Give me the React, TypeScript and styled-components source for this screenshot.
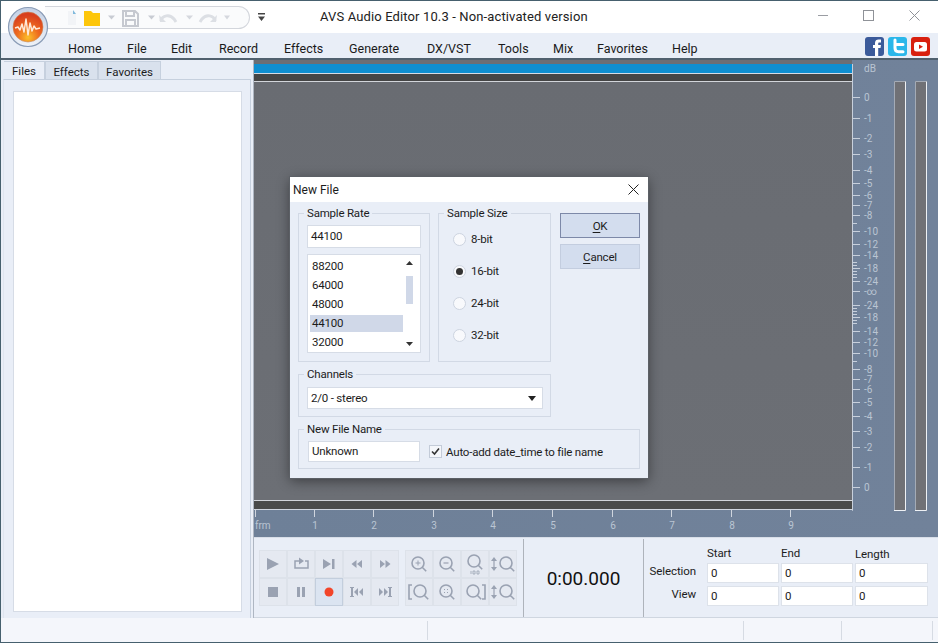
import React from 'react';
import styled, { createGlobalStyle } from 'styled-components';

const GlobalStyle = createGlobalStyle`
  html, body { margin: 0; padding: 0; overflow: hidden; }
  body { font-family: Roboto, 'Noto Sans', sans-serif; font-size: 12px; color: #1c1c1c; }
`;

const Window = styled.div`
  position: relative;
  width: 938px;
  height: 643px;
  box-sizing: border-box;
  display: flex;
  flex-direction: column;
  border-top: 1px solid #46606e;
  border-bottom: 1px solid #46606e;
  border-left: 1px solid #46606e;
  background: #e9eef7;
  overflow: hidden;
`;

const TitleBar = styled.div`
  position: relative;
  height: 32px;
  flex: none;
  background: #fff;
  display: flex;
  align-items: center;
`;

const Logo = styled.svg`
  position: absolute;
  left: 6px;
  top: 5px;
  z-index: 2;
`;

const QuickBar = styled.div`
  height: 23px;
  width: 205px;
  margin: 0 0 0 44px;
  box-sizing: border-box;
  border: 1px solid #d3d6dc;
  border-left: none;
  border-radius: 0 13px 13px 0;
  background: #fafbfc;
  display: flex;
  align-items: center;
`;

const Customize = styled.svg`
  margin-left: 8px;
`;

const AppTitle = styled.div`
  position: absolute;
  left: 319px;
  top: 8px;
  font-size: 13px;
  letter-spacing: 0.13px;
  line-height: 16px;
  color: #222;
`;

const WindowButtons = styled.div`
  margin-left: auto;
  margin-top: -4px;
  display: flex;
  gap: 35px;
  padding-right: 18px;
`;

const MenuBar = styled.div`
  height: 25px;
  flex: none;
  box-sizing: border-box;
  padding: 7px 8px 0 67px;
  display: flex;
  align-items: flex-start;
  background: #e9eef7;
  border-bottom: 0;
`;

const MenuItem = styled.span<{ $width: number }>`
  width: ${({ $width }) => $width}px;
  flex: none;
  line-height: 17px;
  font-size: 12.5px;
  color: #1a1a1a;
`;

const Social = styled.div`
  margin-left: auto;
  margin-top: -3px;
  display: flex;
  gap: 4px;
`;

const HeavyRule = styled.div`
  height: 2px;
  flex: none;
  background: #50606e;
`;

const Body = styled.div`
  flex: 1;
  display: flex;
  min-height: 0;
`;

const LeftPane = styled.div`
  width: 252px;
  flex: none;
  box-sizing: border-box;
  padding: 1px 2px 0 2px;
  display: flex;
  flex-direction: column;
  background: #e9eef7;
`;

const Tabs = styled.div`
  display: flex;
  height: 19px;
  flex: none;
  padding-left: 1px;
`;

const Tab = styled.div<{ $active?: boolean; $width: number }>`
  width: ${({ $width }) => $width}px;
  box-sizing: border-box;
  text-align: center;
  line-height: ${({ $active }) => ($active ? 18 : 20)}px;
  font-size: 11.5px;
  background: ${({ $active }) => ($active ? '#e9eef7' : '#d9e1ed')};
  border: 1px solid #c6d0de;
  border-bottom: ${({ $active }) => ($active ? '0' : '1px solid #c6d0de')};
  border-left: ${({ $active }) => ($active ? '0' : '1px solid #c6d0de')};
  margin-top: 0;
`;

const TabPanel = styled.div`
  flex: 1;
  margin-top: -1px;
  box-sizing: border-box;
  padding: 11px 8px 6px 9px;
  border-top: 1px solid #c6d0de;
  border-right: 1px solid #c6d0de;
  border-left: 1px solid #dfe5ef;
`;

const FileList = styled.div`
  height: 100%;
  background: #fff;
  border: 1px solid #d6dce6;
  box-sizing: border-box;
`;

const RightPane = styled.div`
  flex: 1;
  min-width: 0;
  display: flex;
  flex-direction: column;
  border-left: 1px solid #aeb6c2;
`;

const WavePane = styled.div`
  height: 477px;
  flex: none;
  display: flex;
  background: #6e8098;
  background: linear-gradient(90deg, #6e8098, #71829a);
`;

const WaveColumn = styled.div`
  width: 598px;
  flex: none;
  display: flex;
  flex-direction: column;
  padding-top: 0;
`;

const WaveFrame = styled.div`
  height: 450px;
  flex: none;
  display: flex;
  flex-direction: column;
  background: #6b6e74;
  padding-top: 4px;
  box-sizing: border-box;
`;

const Overview = styled.div`
  height: 9px;
  flex: none;
  background: #0f8ecf;
  border-bottom: 1px solid #d5dbe4;
`;

const TimeStrip = styled.div`
  height: 7px;
  flex: none;
  background: #454545;
  border-bottom: 1px solid #d2d5da;
`;

const Canvas = styled.div`
  flex: 1;
  background: linear-gradient(180deg, #696c72, #6c6f75);
  border-bottom: 1px solid #d2d5da;
`;

const LowerStrip = styled.div`
  height: 8px;
  flex: none;
  background: #4a4b4a;
  border-bottom: 1px solid #cfd5de;
`;

const Drawing = styled.svg`
  display: block;
  flex: none;
  text { font-family: Roboto, sans-serif; font-size: 10px; fill: #bac5d3; }
`;

const TransportBar = styled.div`
  flex: 1;
  display: flex;
  background: #e9eef7;
  border-top: 1px solid #d8dee8;
  border-bottom: 1px solid #cfd6e0;
`;

const Players = styled.div`
  width: 269px;
  flex: none;
  box-sizing: border-box;
  padding: 12px 0 0 5px;
  display: flex;
  gap: 6px;
  align-items: flex-start;
`;

const ButtonGrid = styled.div<{ $cols: number }>`
  display: grid;
  grid-template-columns: repeat(${({ $cols }) => $cols}, 28px);
  grid-auto-rows: 28px;
`;

const ToolButton = styled.div<{ $active?: boolean }>`
  box-sizing: border-box;
  display: flex;
  align-items: center;
  justify-content: center;
  background: ${({ $active }) => ($active ? '#dbe4f1' : '#e5e9f1')};
  border: 1px solid ${({ $active }) => ($active ? '#c3cedd' : '#dde2ea')};
`;

const TimeBox = styled.div`
  width: 121px;
  flex: none;
  box-sizing: border-box;
  margin-top: 1px;
  display: flex;
  align-items: center;
  justify-content: center;
  font-size: 19px;
  color: #111;
  border-left: 1px solid #aeb3bb;
  border-right: 1px solid #aeb3bb;
`;

const RangeGrid = styled.div`
  display: grid;
  grid-template-columns: 60px 72px 72px 73px;
  grid-template-rows: 15px 20px 20px;
  column-gap: 2px;
  row-gap: 3px;
  padding: 7px 0 0 1px;
  align-items: center;
  font-size: 11.5px;
  letter-spacing: -0.1px;
`;

const RangeHead = styled.div<{ $drop?: number }>`
  line-height: 14px;
  padding-top: ${({ $drop }) => $drop ?? 0}px;
`;

const RangeLabel = styled.div<{ $lift: number }>`
  text-align: right;
  padding-right: 9px;
  padding-bottom: ${({ $lift }) => $lift}px;
  line-height: 14px;
`;

const RangeField = styled.div`
  height: 20px;
  box-sizing: border-box;
  background: #fff;
  border: 1px solid #dde2ea;
  padding-left: 3px;
  line-height: 19px;
`;

const StatusBar = styled.div`
  height: 24px;
  flex: none;
  display: flex;
  background: #f4f6fb;
`;

const StatusCell = styled.div<{ $width: number }>`
  width: ${({ $width }) => $width}px;
  flex: none;
  box-sizing: border-box;
  margin: 3px 0 2px;
  border-right: 1px solid #d6dbe3;
`;

const Dialog = styled.div`
  position: absolute;
  left: 289px;
  top: 176px;
  width: 358px;
  height: 301px;
  box-sizing: border-box;
  background: #e9eef7;
  font-size: 11.5px;
  letter-spacing: -0.2px;
  box-shadow: 0 0 0 1px #5c6066, 0 3px 12px rgba(0, 0, 0, 0.45);
`;

const DialogTitle = styled.div`
  height: 25px;
  background: #fff;
  display: flex;
  align-items: center;
  justify-content: space-between;
  padding: 0 9px 0 3px;
  font-size: 12px;
  letter-spacing: 0;
  line-height: 16px;
`;

const DialogBody = styled.div`
  padding: 11px 8px 0;
  display: flex;
  flex-direction: column;
  gap: 12px;
`;

const TopRow = styled.div`
  display: flex;
  gap: 9px;
`;

const LeftColumn = styled.div`
  width: 253px;
  display: flex;
  flex-direction: column;
  gap: 12px;
`;

const PairRow = styled.div`
  display: flex;
  gap: 8px;
`;

const ButtonColumn = styled.div`
  width: 80px;
  display: flex;
  flex-direction: column;
  gap: 6px;
`;

const DialogButton = styled.div<{ $primary?: boolean }>`
  height: 25px;
  box-sizing: border-box;
  text-align: center;
  line-height: 25px;
  background: #d3ddee;
  border: 1px solid ${({ $primary }) => ($primary ? '#7d89a8' : '#c3cddf')};
  u { text-underline-offset: 2px; }
`;

const Group = styled.div<{ $width?: number; $height: number }>`
  position: relative;
  width: ${({ $width }) => ($width ? `${$width}px` : 'auto')};
  height: ${({ $height }) => $height}px;
  box-sizing: border-box;
  border: 1px solid #d2d9e5;
`;

const Legend = styled.span`
  position: absolute;
  left: 5px;
  top: -8px;
  padding: 0 3px;
  line-height: 14px;
  background: #e9eef7;
`;

const RateBody = styled.div`
  padding: 11px 8px 0;
`;

const TextBox = styled.div<{ $width?: number; $height: number }>`
  width: ${({ $width }) => ($width ? `${$width}px` : 'auto')};
  height: ${({ $height }) => $height}px;
  box-sizing: border-box;
  background: #fff;
  border: 1px solid #d6dce6;
  padding-left: 3px;
  line-height: ${({ $height }) => $height - 2}px;
  display: flex;
  align-items: center;
  justify-content: space-between;
`;

const RateList = styled.div`
  position: relative;
  height: 99px;
  margin-top: 6px;
  box-sizing: border-box;
  background: #fff;
  border: 1px solid #d6dce6;
  padding: 2px 2px;
`;

const RateItem = styled.div<{ $selected?: boolean }>`
  width: 93px;
  height: 19px;
  box-sizing: border-box;
  padding: 1px 0;
  text-indent: 2px;
  line-height: 17px;
  background: ${({ $selected }) => ($selected ? '#d0d8e8' : 'transparent')};
  background-clip: content-box;
`;

const ScrollBar = styled.svg`
  position: absolute;
  right: 3px;
  top: 1px;
`;

const RadioColumn = styled.div`
  padding: 9px 0 0 14px;
`;

const RadioRow = styled.div`
  height: 32px;
  display: flex;
  align-items: center;
  gap: 5px;
`;

const RadioDot = styled.span<{ $checked?: boolean }>`
  width: 13px;
  height: 13px;
  box-sizing: border-box;
  border-radius: 50%;
  background: #f8f9fc;
  border: 1px solid #cdd4e0;
  display: flex;
  align-items: center;
  justify-content: center;
  &::after {
    content: '';
    width: 7px;
    height: 7px;
    border-radius: 50%;
    background: ${({ $checked }) => ($checked ? '#333' : 'transparent')};
  }
`;

const ChannelsBody = styled.div`
  padding: 12px 7px 0 8px;
`;

const Arrow = styled.svg`
  margin-right: 6px;
`;

const NameBody = styled.div`
  padding: 11px 0 0 9px;
  display: flex;
  align-items: center;
`;

const CheckBox = styled.span`
  width: 13px;
  height: 13px;
  margin-left: 9px;
  box-sizing: border-box;
  background: #f4f6fa;
  border: 1px solid #c3cbd8;
  display: flex;
  align-items: center;
  justify-content: center;
`;

const CheckLabel = styled.span`
  margin-left: 4px;
`;

const MENU: [string, number][] = [
  ['Home', 59], ['File', 44], ['Edit', 48], ['Record', 65], ['Effects', 65], ['Generate', 78],
  ['DX/VST', 71], ['Tools', 55], ['Mix', 44], ['Favorites', 75], ['Help', 40],
];

const DB_TICKS: [number, string?][] = [
  [97, '0'], [118, '-1'], [138, '-2'], [154, '-3'], [170, '-4'], [183, '-5'], [195, '-6'], [205, '-7'], [215, '-8'],
  [223], [231, '-10'], [244, '-12'], [255, '-14'], [262], [265], [268, '-18'], [271], [274], [277], [281, '-24'], [291, '-∞'],
  [305, '-24'], [308], [311], [314], [317, '-18'], [320], [323], [331, '-14'], [342, '-12'], [353, '-10'], [361],
  [369, '-8'], [379, '-7'], [389, '-6'], [402, '-5'], [416, '-4'], [431, '-3'], [447, '-2'], [467, '-1'], [487, '0'],
];

const RATES = ['88200', '64000', '48000', '44100', '32000'];
const BITS = ['8-bit', '16-bit', '24-bit', '32-bit'];
const GREY = '#9aa2b2';

const QuickIcons = () => (
  <svg width="185" height="21" viewBox="0 0 185 21" style={{ flex: 'none' }}>
    <path d="M23 4h5l3 3v11H23z" fill="#f2f4f7" />
    <path d="M28 3l3 4h-3z" fill="#7fb9dc" />
    <path d="M39 6h7l2 2h7v13H39z" fill="#fdc60b" transform="translate(0 -2)" />
    <path d="M63 8.500h7L66.500 12.500z" fill="#c8ccd3" />
    <path d="M78 4h12l3 3v12H78z M81 4v5h8V4 M81 19v-6h9v6" fill="none" stroke="#c6c9d0" strokeWidth="2" />
    <path d="M103 8.500h7L106.500 12.500z" fill="#c8ccd3" />
    <path d="M116 14c1-6 9-7 13-2l2 3" fill="none" stroke="#dcdfe4" strokeWidth="3" />
    <path d="M114 8l1 7h6z" fill="#dcdfe4" />
    <path d="M141 8.500h7L144.500 12.500z" fill="#d5d8de" />
    <path d="M170 14c-1-6-9-7-13-2l-2 3" fill="none" stroke="#dcdfe4" strokeWidth="3" />
    <path d="M172 8l-1 7h-6z" fill="#dcdfe4" />
    <path d="M179 8.500h6L182 12.500z" fill="#d5d8de" />
  </svg>
);

const AppLogo = () => (
  <Logo width="42" height="42" viewBox="0 0 42 42">
    <defs>
      <radialGradient id="orb" cx="50%" cy="85%" r="75%">
        <stop offset="0" stopColor="#fbc02a" />
        <stop offset="0.5" stopColor="#ee6a1f" />
        <stop offset="1" stopColor="#d8401f" />
      </radialGradient>
      <linearGradient id="ring" x1="0" y1="0" x2="0" y2="1">
        <stop offset="0" stopColor="#c3d0e4" />
        <stop offset="1" stopColor="#eef2f8" />
      </linearGradient>
    </defs>
    <circle cx="21" cy="21" r="19.500" fill="url(#ring)" stroke="#8a9cb6" strokeWidth="1.200" />
    <circle cx="21" cy="21" r="15" fill="url(#orb)" stroke="#c98a5c" strokeWidth="0.600" />
    <path d="M8 22l3-1 2 3 2-6 2 8 2-13 2 16 2-12 2 8 2-5 2 3 4-1" fill="none" stroke="#ffe9d8" strokeWidth="1.500" strokeLinejoin="round" />
  </Logo>
);

const Facebook = () => (
  <svg width="19" height="19" viewBox="0 0 19 19">
    <rect width="19" height="19" rx="3" fill="#3b5a9a" />
    <path d="M10 19v-8H8V8h2V6c0-2.500 1.500-3.500 3.500-3.500H16v3h-1.500c-1 0-1.300.4-1.300 1.200V8H16l-.5 3h-2.300v8z" fill="#fff" />
  </svg>
);

const Twitter = () => (
  <svg width="19" height="19" viewBox="0 0 19 19">
    <rect width="19" height="19" rx="3" fill="#2bb7ea" />
    <path d="M7 3v8c0 2.500 1.300 3.700 3.500 3.700H15 M7 7.500h8" fill="none" stroke="#fff" strokeWidth="3" strokeLinecap="round" />
  </svg>
);

const YouTube = () => (
  <svg width="19" height="19" viewBox="0 0 19 19">
    <rect width="19" height="19" rx="3" fill="#d8200f" />
    <rect x="3" y="5" width="13" height="9.500" rx="2.500" fill="#fff" />
    <path d="M8 7.500l4 2.300-4 2.300z" fill="#d8200f" />
  </svg>
);

const Glyph = ({ children }: { children: React.ReactNode }) => (
  <svg width="26" height="26" viewBox="0 0 26 26">{children}</svg>
);

const Lens = ({ cx = 12, cy = 12, r = 6 }: { cx?: number; cy?: number; r?: number }) => (
  <path
    d={`M${cx - r} ${cy}a${r} ${r} 0 1 0 ${2 * r} 0a${r} ${r} 0 1 0 ${-2 * r} 0M${cx + r * 0.7} ${cy + r * 0.7}l4 4`}
    fill="none"
    stroke={GREY}
    strokeWidth="1.600"
  />
);

const Updown = () => <path d="M4 4l3 4H1z M4 18l3-4H1z M3.400 8h1.200v6H3.400z" fill={GREY} transform="translate(0 2)" />;

const PLAYER_ICONS: { key: string; node: React.ReactNode; active?: boolean }[] = [
  { key: 'play', node: <path d="M7 7l12 6-12 6z" fill={GREY} /> },
  {
    key: 'loop',
    node: (
      <>
        <path d="M11 10H7v7h13v-7h-3" fill="none" stroke={GREY} strokeWidth="1.500" />
        <path d="M11 6.500l5 3.500-5 3.500z" fill={GREY} />
      </>
    ),
  },
  { key: 'next', node: <path d="M7 8l8 5-8 5z M16 8h2.500v10H16z" fill={GREY} /> },
  { key: 'rew', node: <path d="M12.500 9v8L7.500 13z M18 9v8l-5-4z" fill={GREY} /> },
  { key: 'ff', node: <path d="M8 9v8l5-4z M13.500 9v8l5-4z" fill={GREY} /> },
  { key: 'stop', node: <rect x="8" y="8" width="10" height="10" fill={GREY} /> },
  { key: 'pause', node: <path d="M9 8h3v10H9z M14 8h3v10h-3z" fill={GREY} /> },
  { key: 'rec', node: <circle cx="13" cy="13" r="4.500" fill="#f2452a" />, active: true },
  { key: 'begin', node: <path d="M7 8h2v10H7z M6 8h4v1H6z M6 17h4v1H6z M14 9v8l-4-4z M19 9v8l-4-4z" fill={GREY} /> },
  { key: 'end', node: <path d="M7 9v8l4-4z M12 9v8l4-4z M17 8h2v10h-2z M16 8h4v1h-4z M16 17h4v1h-4z" fill={GREY} /> },
];

const ZOOM_ICONS: { key: string; node: React.ReactNode }[] = [
  { key: 'in', node: <><Lens /><path d="M9.500 12h5M12 9.500v5" stroke={GREY} /></> },
  { key: 'out', node: <><Lens /><path d="M9.500 12h5" stroke={GREY} strokeWidth="1.200" /></> },
  { key: '100', node: <><Lens cy={10} /><path d="M9 20v3M11 20h2v3h-2z M15 20h2v3h-2z" fill="none" stroke={GREY} strokeWidth="0.800" /></> },
  { key: 'vin', node: <><Updown /><Lens cx={16} /></> },
  { key: 'left', node: <><path d="M6 6H3v14h3" fill="none" stroke={GREY} strokeWidth="1.600" /><Lens cx={14} /></> },
  { key: 'fit', node: <><Lens /><path d="M10 10.500h1M13 10.500h1M10 13.500h1M13 13.500h1" stroke={GREY} /></> },
  { key: 'right', node: <><Lens cx={11} /><path d="M20 6h3v14h-3" fill="none" stroke={GREY} strokeWidth="1.600" /></> },
  { key: 'vout', node: <><Updown /><Lens cx={16} /></> },
];

const DbScale = () => (
  <Drawing width="85" height="477" viewBox="852 60 85 477">
    <path d="M852.500 64V510.500H853" stroke="#c8d0dc" fill="none" />
    {DB_TICKS.map(([y, label]) => (
      <g key={y}>
        <path d={`M853 ${y + 0.5}h${label ? 7 : 4}`} stroke="#c8d0dc" />
        {label && <text x="864" y={y + 4}>{label}</text>}
      </g>
    ))}
    <text x="864" y="72">dB</text>
    {[894, 915].map((x) => (
      <g key={x}>
        <rect x={x} y={81} width={12} height={430} fill="#707176" />
        <path d={`M${x + 0.5} 511V81.500H${x + 11.5}`} fill="none" stroke="#a4abb6" />
        <path d={`M${x + 11.5} 81.500V510.500H${x}`} fill="none" stroke="#eef1f5" />
      </g>
    ))}
  </Drawing>
);

const Ruler = () => (
  <Drawing width="598" height="26" viewBox="254 511 598 26">
    <path d="M255.500 511v7" stroke="#cfd5de" />
    <text x="255" y="530">frm</text>
    {[315, 374, 434, 493, 553, 613, 672, 732, 791].map((x, i) => (
      <g key={x}>
        <path d={`M${x - 0.5} 511v7`} stroke="#cfd5de" />
        <text x={x} y="530" textAnchor="middle">{i + 1}</text>
      </g>
    ))}
  </Drawing>
);

const App: React.FC = () => (
  <>
    <GlobalStyle />
    <Window>
      <TitleBar>
        <AppLogo />
        <QuickBar><QuickIcons /></QuickBar>
        <Customize width="7" height="9" viewBox="0 0 7 9"><path d="M0 0h7v1.500H0z M0 3.500h7L3.500 8z" fill="#444" /></Customize>
        <AppTitle>AVS Audio Editor 10.3 - Non-activated version</AppTitle>
        <WindowButtons>
          <svg width="10" height="11" viewBox="0 0 10 11"><path d="M0 5.500h10" stroke="#9a9da3" /></svg>
          <svg width="11" height="11" viewBox="0 0 11 11"><rect x="0.500" y="0.500" width="10" height="10" fill="none" stroke="#8f9298" /></svg>
          <svg width="11" height="11" viewBox="0 0 11 11"><path d="M0.500 0.500l10 10M10.500 0.500l-10 10" stroke="#8f9298" /></svg>
        </WindowButtons>
      </TitleBar>
      <MenuBar>
        {MENU.map(([name, width]) => <MenuItem key={name} $width={width}>{name}</MenuItem>)}
        <Social><Facebook /><Twitter /><YouTube /></Social>
      </MenuBar>
      <HeavyRule />
      <Body>
        <LeftPane>
          <Tabs>
            <Tab $active $width={41}>Files</Tab>
            <Tab $width={53}>Effects</Tab>
            <Tab $width={63}>Favorites</Tab>
          </Tabs>
          <TabPanel><FileList /></TabPanel>
        </LeftPane>
        <RightPane>
          <WavePane>
            <WaveColumn>
              <WaveFrame>
                <Overview />
                <TimeStrip />
                <Canvas />
                <LowerStrip />
              </WaveFrame>
              <Ruler />
            </WaveColumn>
            <DbScale />
          </WavePane>
          <TransportBar>
            <Players>
              <ButtonGrid $cols={5}>
                {PLAYER_ICONS.map((b) => <ToolButton key={b.key} $active={b.active}><Glyph>{b.node}</Glyph></ToolButton>)}
              </ButtonGrid>
              <ButtonGrid $cols={4}>
                {ZOOM_ICONS.map((b) => <ToolButton key={b.key}><Glyph>{b.node}</Glyph></ToolButton>)}
              </ButtonGrid>
            </Players>
            <TimeBox>0:00.000</TimeBox>
            <RangeGrid>
              <span />
              <RangeHead>Start</RangeHead>
              <RangeHead>End</RangeHead>
              <RangeHead $drop={2}>Length</RangeHead>
              <RangeLabel $lift={5}>Selection</RangeLabel>
              <RangeField>0</RangeField>
              <RangeField>0</RangeField>
              <RangeField>0</RangeField>
              <RangeLabel $lift={4}>View</RangeLabel>
              <RangeField>0</RangeField>
              <RangeField>0</RangeField>
              <RangeField>0</RangeField>
            </RangeGrid>
          </TransportBar>
        </RightPane>
      </Body>
      <StatusBar>
        <StatusCell $width={427} />
        <StatusCell $width={316} />
        <StatusCell $width={98} />
        <StatusCell $width={91} />
      </StatusBar>
      <Dialog>
        <DialogTitle>
          New File
          <svg width="11" height="11" viewBox="0 0 11 11"><path d="M0.500 0.500l10 10M10.500 0.500l-10 10" stroke="#222" /></svg>
        </DialogTitle>
        <DialogBody>
          <TopRow>
            <LeftColumn>
              <PairRow>
                <Group $width={132} $height={149}>
                  <Legend>Sample Rate</Legend>
                  <RateBody>
                    <TextBox $height={23}>44100</TextBox>
                    <RateList>
                      {RATES.map((r) => <RateItem key={r} $selected={r === '44100'}>{r}</RateItem>)}
                      <ScrollBar width="14" height="95" viewBox="0 0 14 95">
                        <path d="M3 9h7L6.500 5z M3 86h7l-3.500 4z" fill="#333" />
                        <rect x="3" y="20" width="7" height="28" fill="#d0d8e8" />
                      </ScrollBar>
                    </RateList>
                  </RateBody>
                </Group>
                <Group $width={113} $height={149}>
                  <Legend>Sample Size</Legend>
                  <RadioColumn>
                    {BITS.map((b) => <RadioRow key={b}><RadioDot $checked={b === '16-bit'} />{b}</RadioRow>)}
                  </RadioColumn>
                </Group>
              </PairRow>
              <Group $height={43}>
                <Legend>Channels</Legend>
                <ChannelsBody>
                  <TextBox $height={22}>
                    2/0 - stereo
                    <Arrow width="8" height="5" viewBox="0 0 8 5"><path d="M0 0h8L4 5z" fill="#222" /></Arrow>
                  </TextBox>
                </ChannelsBody>
              </Group>
            </LeftColumn>
            <ButtonColumn>
              <DialogButton $primary><u>O</u>K</DialogButton>
              <DialogButton><u>C</u>ancel</DialogButton>
            </ButtonColumn>
          </TopRow>
          <Group $height={40}>
            <Legend>New File Name</Legend>
            <NameBody>
              <TextBox $width={112} $height={21}>Unknown</TextBox>
              <CheckBox>
                <svg width="9" height="9" viewBox="0 0 9 9"><path d="M1 4.500l2.500 2.500L8 1.500" fill="none" stroke="#333" strokeWidth="1.600" /></svg>
              </CheckBox>
              <CheckLabel>Auto-add date_time to file name</CheckLabel>
            </NameBody>
          </Group>
        </DialogBody>
      </Dialog>
    </Window>
  </>
);

export default App;
